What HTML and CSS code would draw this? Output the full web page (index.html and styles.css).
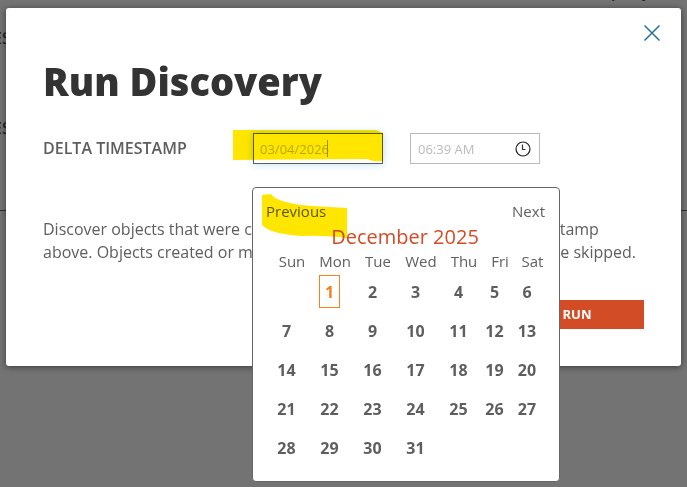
FILE: index.html
```html
<!DOCTYPE html>
<html lang="en">
<head>
    <meta charset="UTF-8">
    <meta name="viewport" content="width=device-width, initial-scale=1.0">
    <title>Run Discovery</title>
    <link rel="stylesheet" href="styles.css">
</head>
<body>
    <!-- dimmed page behind the dialog -->
    <div class="backdrop" aria-hidden="true">
        <span class="backdrop-text first">ES</span>
        <span class="backdrop-text second">ES</span>
        <span class="backdrop-text top">p&nbsp;&nbsp;&nbsp;&nbsp;&nbsp;y</span>
        <hr class="backdrop-line">
    </div>

    <main class="dialog" role="dialog" aria-labelledby="dialogTitle">
        <button type="button" class="close" aria-label="Close">
            <svg width="16" height="16" viewBox="0 0 16 16"><path d="M0.5 0.5L15.5 15.5M15.5 0.5L0.5 15.5" fill="none" stroke="#24709f" stroke-width="1.5"/></svg>
        </button>

        <h1 id="dialogTitle">Run Discovery</h1>

        <form>
            <div class="timestamp">
                <label for="deltaDate">DELTA TIMESTAMP</label>
                <div class="field">
                    <input type="text" id="deltaDate" class="date-input" value="03/04/2026">
                    <span class="caret"></span>
                    <svg class="marker marker-date" width="151" height="32" viewBox="0 0 151 32"><path d="M0 0H143L150 3V31Q140 32 134 29L0 30Z"/></svg>

                    <div class="calendar">
                        <div class="calendar-nav">
                            <button type="button">Previous</button>
                            <button type="button">Next</button>
                        </div>
                        <table>
                            <caption>December 2025</caption>
                            <colgroup>
                                <col span="5" class="wide"><col class="narrow"><col class="last">
                            </colgroup>
                            <thead>
                                <tr><th>Sun</th><th>Mon</th><th>Tue</th><th>Wed</th><th>Thu</th><th>Fri</th><th>Sat</th></tr>
                            </thead>
                            <tbody>
                                <tr>
                                    <td></td>
                                    <td><button type="button" class="selected">1</button></td>
                                    <td><button type="button">2</button></td>
                                    <td><button type="button">3</button></td>
                                    <td><button type="button">4</button></td>
                                    <td><button type="button">5</button></td>
                                    <td><button type="button">6</button></td>
                                </tr>
                                <tr>
                                    <td><button type="button">7</button></td>
                                    <td><button type="button">8</button></td>
                                    <td><button type="button">9</button></td>
                                    <td><button type="button">10</button></td>
                                    <td><button type="button">11</button></td>
                                    <td><button type="button">12</button></td>
                                    <td><button type="button">13</button></td>
                                </tr>
                                <tr>
                                    <td><button type="button">14</button></td>
                                    <td><button type="button">15</button></td>
                                    <td><button type="button">16</button></td>
                                    <td><button type="button">17</button></td>
                                    <td><button type="button">18</button></td>
                                    <td><button type="button">19</button></td>
                                    <td><button type="button">20</button></td>
                                </tr>
                                <tr>
                                    <td><button type="button">21</button></td>
                                    <td><button type="button">22</button></td>
                                    <td><button type="button">23</button></td>
                                    <td><button type="button">24</button></td>
                                    <td><button type="button">25</button></td>
                                    <td><button type="button">26</button></td>
                                    <td><button type="button">27</button></td>
                                </tr>
                                <tr>
                                    <td><button type="button">28</button></td>
                                    <td><button type="button">29</button></td>
                                    <td><button type="button">30</button></td>
                                    <td><button type="button">31</button></td>
                                    <td></td>
                                    <td></td>
                                    <td></td>
                                </tr>
                            </tbody>
                        </table>
                        <svg class="marker marker-previous" width="85" height="44" viewBox="0 0 85 44"><path d="M0 1L9 0Q15 9 50 12L85 14V44Q60 41 40 42Q8 40 0 31Z"/></svg>
                    </div>
                </div>
                <div class="field">
                    <input type="text" id="deltaTime" aria-label="Time" value="06:39 AM">
                    <svg class="clock" width="16" height="16" viewBox="0 0 16 16"><circle cx="8" cy="8" r="7" fill="none" stroke="#222" stroke-width="1.2"/><path d="M7.5 3.5V8.5H10.5" fill="none" stroke="#333" stroke-width="1.2"/></svg>
                </div>
            </div>

            <p>Discover objects that were created or modified since the Delta Time Stamp above. Objects created or modified before the Delta Timestamp will be skipped.</p>

            <div class="actions">
                <button type="submit" class="run">RUN</button>
            </div>
        </form>
    </main>
</body>
</html>
```
FILE: styles.css
```css
* {
    box-sizing: border-box;
}

body {
    margin: 0;
    padding: 8px 6px;
    min-height: 100vh;
    overflow: hidden;
    background-color: #737373;
    font-family: "Open Sans", "Noto Sans", sans-serif;
    font-size: 16px;
    color: #5e5e5e;
}

button {
    margin: 0;
    padding: 0;
    border: 0;
    background: none;
    font: inherit;
    color: inherit;
    cursor: pointer;
}

.backdrop {
    position: absolute;
    inset: 0;
    overflow: hidden;
    color: #26282c;
}

.backdrop-text {
    position: absolute;
    left: -7px;
    font-weight: 600;
    line-height: 20px;
}

.first {
    top: 28px;
}

.second {
    top: 118px;
}

.top {
    top: -19px;
    left: 611px;
}

.backdrop-line {
    position: absolute;
    top: 210px;
    width: 100%;
    margin: 0;
    border: 0;
    border-top: 1px solid #303030;
}

.dialog {
    position: relative;
    padding: 37px;
    border-radius: 3px;
    background-color: #fff;
    box-shadow: 0 1px 6px rgba(0, 0, 0, 0.5);
}

.close {
    position: absolute;
    top: 17px;
    right: 21px;
    width: 16px;
    height: 16px;
}

.close svg {
    display: block;
}

h1 {
    margin: 0 0 16px;
    font-size: 38px;
    font-weight: 800;
    line-height: 72px;
    color: #333;
}

.timestamp {
    display: flex;
    gap: 27px;
}

.timestamp label {
    width: 183px;
    font-weight: 600;
    line-height: 30px;
    white-space: nowrap;
}

.field {
    position: relative;
    width: 130px;
}

.field input {
    display: block;
    width: 100%;
    height: 31px;
    padding: 0 7px;
    border: 1px solid #bbb;
    border-radius: 0;
    outline: none;
    background-color: #fff;
    font: inherit;
    font-size: 13px;
    color: #bbb;
}

.field .date-input {
    padding: 0 6px;
    border-color: #5e5e5e;
    box-shadow: 0 0 8px rgba(80, 170, 230, 0.4);
}

.caret {
    position: absolute;
    top: 7px;
    left: 74px;
    width: 1px;
    height: 17px;
    background-color: #999;
}

.clock {
    position: absolute;
    top: 8px;
    right: 9px;
}

/* highlighter strokes */
.marker {
    position: absolute;
    fill: #ffe600;
    mix-blend-mode: multiply;
    pointer-events: none;
}

.marker-date {
    top: -3px;
    left: -20px;
}

.marker-previous {
    top: 6px;
    left: 9px;
}

.calendar {
    position: absolute;
    top: 54px;
    left: -1px;
    z-index: 1;
    width: 308px;
    padding: 11px 14px 14px 12px;
    border: 1px solid #666;
    border-radius: 4px;
    background-color: #fff;
    font-size: 15px;
}

.calendar-nav {
    display: flex;
    justify-content: space-between;
    padding-left: 1px;
    line-height: 24px;
}

.calendar table {
    width: 100%;
    table-layout: fixed;
    border-collapse: collapse;
}

.calendar caption {
    font-size: 20px;
    line-height: 28px;
    color: #d24d25;
}

.wide {
    width: 43px;
}

.narrow {
    width: 29px;
}

.last {
    width: 36px;
}

.calendar th {
    height: 21px;
    padding: 0 0 0 11px;
    font-weight: 400;
    line-height: 21px;
    text-align: center;
    white-space: nowrap;
}

.calendar td {
    height: 39px;
    padding: 0;
    text-align: center;
    vertical-align: middle;
}

.calendar td button {
    display: block;
    min-width: 21px;
    height: 33px;
    margin: 0 auto;
    font-size: 16px;
    font-weight: 700;
}

.calendar td .selected {
    border: 1px solid #f5821f;
    color: #f5821f;
}

p {
    margin: 54px 0 36px;
    line-height: 23px;
}

.actions {
    display: flex;
    justify-content: flex-end;
}

.run {
    width: 134px;
    height: 29px;
    padding-bottom: 1px;
    background-color: #d24d25;
    font-size: 13px;
    font-weight: 700;
    color: #fff;
}
```
